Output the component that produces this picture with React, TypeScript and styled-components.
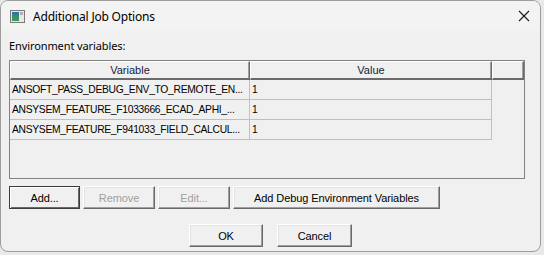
import React from "react";
import styled, { createGlobalStyle, css } from "styled-components";

const Global = createGlobalStyle`
  html, body { margin: 0; padding: 0; background: #e9e9e9; }
  body { width: 544px; height: 255px; overflow: hidden; }
`;

const Win = styled.div`
  box-sizing: border-box;
  width: 541px;
  height: 252px;
  border: 1px solid #9c9c9c;
  border-radius: 8px;
  overflow: hidden;
  background: #f0f0f0;
  display: flex;
  flex-direction: column;
  font-family: "Liberation Sans", Arial, sans-serif;
`;

const TitleBar = styled.div`
  height: 30px;
  flex: none;
  background: #f3f3f3;
  display: flex;
  align-items: center;
  padding-left: 9px;
  padding-right: 10px;
`;

const Title = styled.span`
  font-family: "Noto Sans", sans-serif;
  font-size: 12px;
  color: #000;
  margin-left: 8px;
  flex: 1;
  letter-spacing: -0.2px;
`;

const Body = styled.div`
  flex: 1;
  display: flex;
  flex-direction: column;
  padding: 6px 15px 0 8px;
`;

const Label = styled.div`
  font-family: "Noto Sans", sans-serif;
  font-size: 11px;
  height: 17px;
  line-height: 17px;
  letter-spacing: -0.1px;
`;

const TableFrame = styled.div`
  margin-top: 6px;
  box-sizing: border-box;
  width: 516px;
  height: 119px;
  border: 1px solid #828282;
  background: #f0f0f0;
  display: flex;
  flex-direction: column;
`;

const HeaderRow = styled.div`
  display: grid;
  grid-template-columns: 240px 242px 32px;
  height: 19px;
`;

const HeaderCell = styled.div`
  box-sizing: border-box;
  border-top: 1px solid #fff;
  border-left: 1px solid #fff;
  border-right: 1px solid #6a6a6a;
  border-bottom: 2px solid #6a6a6a;
  box-shadow: inset -1px 0 0 #a0a0a0;
  font-size: 11px;
  color: #1a1a3a;
  display: flex;
  align-items: center;
  justify-content: center;
`;

const DataRow = styled.div`
  display: grid;
  grid-template-columns: 240px 242px;
  height: 20px;
`;

const Cell = styled.div`
  box-sizing: border-box;
  border-right: 1px solid #c0c0c0;
  border-bottom: 1px solid #c0c0c0;
  font-size: 10.3px;
  letter-spacing: -0.3px;
  color: #000;
  padding-left: 2px;
  display: flex;
  align-items: center;
  white-space: nowrap;
  overflow: hidden;
`;

const ButtonRow = styled.div`
  display: flex;
  gap: 3px;
  margin-top: 7px;
`;

const Btn = styled.button<{ $w: number; $disabled?: boolean; $default?: boolean }>`
  box-sizing: border-box;
  width: ${(p) => p.$w}px;
  height: 23px;
  padding: 0;
  margin: 0;
  font-family: "Liberation Sans", Arial, sans-serif;
  font-size: 11px;
  letter-spacing: -0.1px;
  background: #f0f0f0;
  color: ${(p) => (p.$disabled ? "#a0a0a0" : "#000")};
  border: 1px solid;
  border-color: #ffffff #696969 #696969 #ffffff;
  box-shadow: inset -1px -1px 0 #a0a0a0, inset 1px 1px 0 #e3e3e3;
  ${(p) =>
    p.$default &&
    css`
      border-color: #3c3c3c;
      box-shadow: inset 1px 1px 0 #fff, inset -1px -1px 0 #696969;
    `}
`;

const FooterRow = styled.div`
  display: flex;
  justify-content: center;
  gap: 14px;
  margin-top: 15px;
  padding-left: 7px;
`;

const Close = styled.div`
  width: 12px;
  height: 12px;
  display: flex;
`;

const AppIcon = () => (
  <svg width="15" height="13" viewBox="0 0 15 13">
    <rect x="0.5" y="0.5" width="14" height="12" fill="#e8e8e8" stroke="#7a7a7a" />
    <defs>
      <linearGradient id="g" x1="0" y1="0" x2="0" y2="1">
        <stop offset="0" stopColor="#2e6fa8" />
        <stop offset="0.5" stopColor="#3a8c7a" />
        <stop offset="1" stopColor="#3f9a4a" />
      </linearGradient>
    </defs>
    <rect x="2" y="2" width="7" height="9" fill="url(#g)" />
    <rect x="10" y="2" width="3" height="3" fill="#b0b0b0" />
  </svg>
);

export default function App() {
  const rows = [
    "ANSOFT_PASS_DEBUG_ENV_TO_REMOTE_EN...",
    "ANSYSEM_FEATURE_F1033666_ECAD_APHI_...",
    "ANSYSEM_FEATURE_F941033_FIELD_CALCUL...",
  ];
  return (
    <>
      <Global />
      <Win>
        <TitleBar>
          <AppIcon />
          <Title>Additional Job Options</Title>
          <Close>
            <svg width="12" height="12" viewBox="0 0 12 12">
              <path d="M1 1 L11 11 M11 1 L1 11" stroke="#1a1a1a" strokeWidth="1.1" />
            </svg>
          </Close>
        </TitleBar>
        <Body>
          <Label>Environment variables:</Label>
          <TableFrame>
            <HeaderRow>
              <HeaderCell>Variable</HeaderCell>
              <HeaderCell>Value</HeaderCell>
              <HeaderCell />
            </HeaderRow>
            {rows.map((r) => (
              <DataRow key={r}>
                <Cell>{r}</Cell>
                <Cell>1</Cell>
              </DataRow>
            ))}
          </TableFrame>
          <ButtonRow>
            <Btn $w={71} $default>Add...</Btn>
            <Btn $w={72} $disabled>Remove</Btn>
            <Btn $w={72} $disabled>Edit...</Btn>
            <Btn $w={207}>Add Debug Environment Variables</Btn>
          </ButtonRow>
          <FooterRow>
            <Btn $w={74}>OK</Btn>
            <Btn $w={75}>Cancel</Btn>
          </FooterRow>
        </Body>
      </Win>
    </>
  );
}
